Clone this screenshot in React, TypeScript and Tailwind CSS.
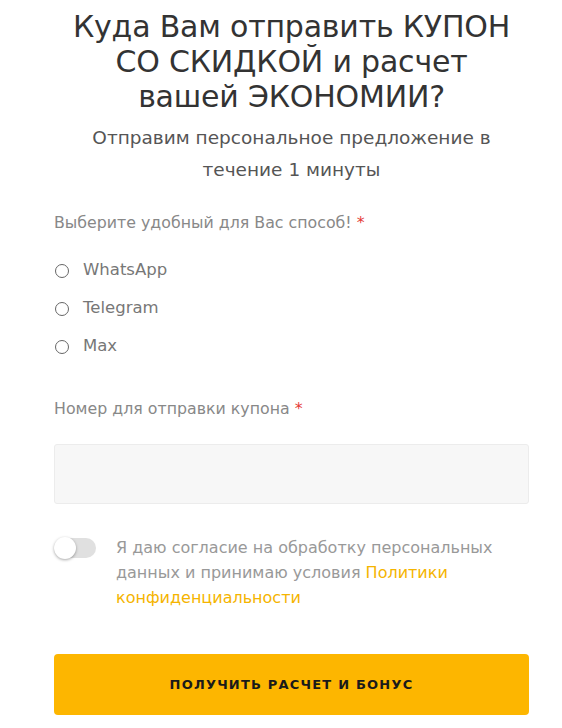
import React from 'react';

const font = { fontFamily: '"DejaVu Sans", "Open Sans", sans-serif' };

const Radio: React.FC<{ label: string }> = ({ label }) => (
  <label className="flex items-center h-[38px]">
    <span className="w-[14px] h-[14px] rounded-full border border-[#666] ml-[1px] mr-[14px]"></span>
    <span className="text-[16.5px] text-[#777]">{label}</span>
  </label>
);

const App: React.FC = () => {
  return (
    <div className="w-[562px] min-h-[728px] bg-white" style={font}>
      <div className="w-[475px] ml-[54px] pt-[9px]">
        <h2 className="text-center text-[#333] text-[30px] leading-[35px] tracking-[-0.2px]">
          Куда Вам отправить КУПОН
          <br />
          СО СКИДКОЙ и расчет
          <br />
          вашей ЭКОНОМИИ?
        </h2>
        <p className="text-center text-[#555] text-[18.5px] leading-[32px] mt-[8px]">
          Отправим персональное предложение в
          <br />
          течение 1 минуты
        </p>

        <div className="mt-[25px] text-[15.8px] text-[#888]">
          Выберите удобный для Вас способ! <span className="text-[#e53935]">*</span>
        </div>
        <div className="mt-[17px] flex flex-col">
          <Radio label="WhatsApp" />
          <Radio label="Telegram" />
          <Radio label="Max" />
        </div>

        <div className="mt-[31px] text-[15.8px] text-[#888]">
          Номер для отправки купона <span className="text-[#e53935]">*</span>
        </div>
        <input
          type="text"
          className="mt-[24px] block w-full h-[60px] bg-[#f7f7f7] border border-[#ececec] rounded-[3px] outline-none"
        />

        <div className="mt-[31px] flex items-start">
          <div className="relative w-[42px] h-[20px] mt-[3px] shrink-0 rounded-full bg-[#e0e0e0]">
            <div className="absolute left-0 top-[-1px] w-[22px] h-[22px] rounded-full bg-white shadow-[0_1px_3px_rgba(0,0,0,0.35)]"></div>
          </div>
          <p className="ml-[20px] text-[16px] leading-[25px] text-[#999]">
            Я даю согласие на обработку персональных данных и принимаю условия{' '}
            <span className="text-[#f5b400]">Политики конфиденциальности</span>
          </p>
        </div>

        <button className="mt-[44px] w-full h-[61px] rounded-[4px] bg-[#fdb600] text-[#1a1a1a] text-[13px] font-bold tracking-[1.2px]">
          ПОЛУЧИТЬ РАСЧЕТ И БОНУС
        </button>
      </div>
    </div>
  );
};

export default App;
